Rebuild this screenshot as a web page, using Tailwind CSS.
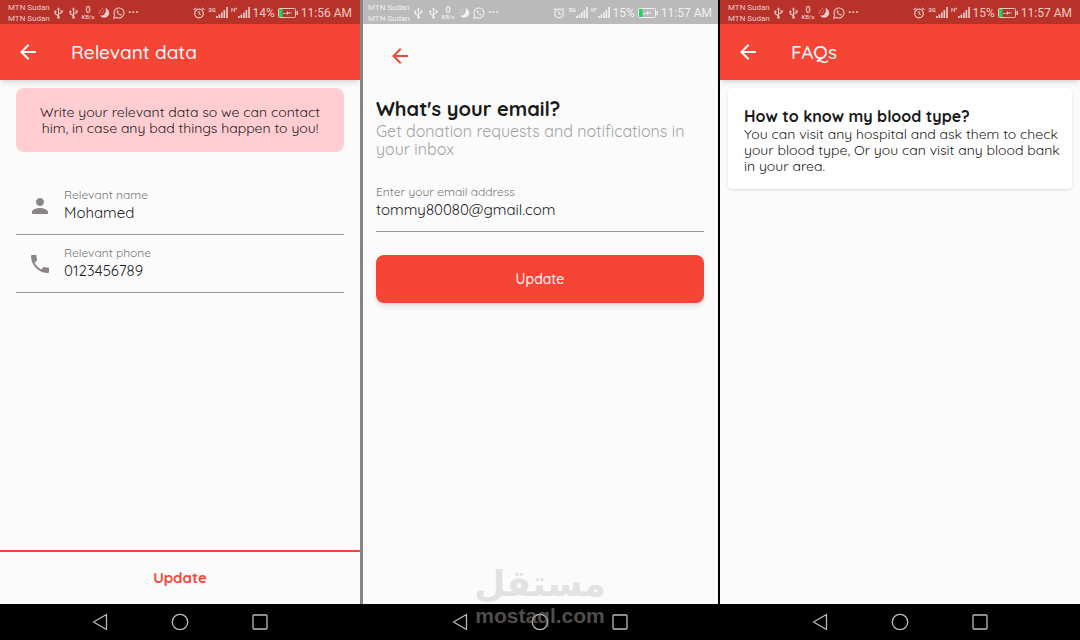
<!DOCTYPE html>
<html lang="en">
<head>
    <meta charset="UTF-8">
    <meta name="viewport" content="width=device-width, initial-scale=1.0">
    <title>Blood Donation App - Screens</title>
    <!-- Tailwind CSS CDN -->
    <script src="https://cdn.jsdelivr.net/npm/@tailwindcss/browser@4"></script>
</head>
<body class="min-h-screen bg-black font-['Quicksand','Lato',sans-serif] text-[#222]">
    <!-- Shared icons -->
    <svg class="hidden">
        <symbol id="usb" viewBox="0 0 10 13">
            <path d="M5 2v9M5 9.500L1.500 7.500V5M5 8l3.500-2V4.500" fill="none" stroke="currentColor" stroke-width="1.200"/>
            <path d="M5 0l1.800 2.800H3.200z" fill="currentColor"/>
            <circle cx="5" cy="11.300" r="1.500" fill="currentColor"/>
            <circle cx="1.500" cy="5" r="1.300" fill="currentColor"/>
            <path d="M7.300 3.500h2.400v2.400H7.300z" fill="currentColor"/>
        </symbol>
        <symbol id="moon" viewBox="0 0 12 12">
            <path d="M7.500 1A5 5 0 1 1 2 8.500C5.500 9 8.800 6 7.500 1z" fill="currentColor"/>
            <path d="M1.500 6.500A4.500 4.500 0 0 1 6 1.500" fill="none" stroke="currentColor" stroke-width="1" stroke-dasharray="1 1.500"/>
            <path d="M4 6A3 3 0 0 1 6 4" fill="none" stroke="currentColor" stroke-width=".8" stroke-dasharray="1 1"/>
        </symbol>
        <symbol id="chat" viewBox="0 0 12 12">
            <path d="M.8 11.200l.8-2.800A5 5 0 1 1 3.600 10.400z" fill="none" stroke="currentColor" stroke-width="1.100"/>
            <path d="M4.300 3.200c-1 .6-.8 2 .6 3.600s3 2.200 3.800 1.200c.4-.5.2-.8-1-1.300l-.8.7C6 7 5.300 6.300 5 5.500l.6-.7c-.4-1.200-.7-1.900-1.300-1.600z" fill="currentColor"/>
        </symbol>
        <symbol id="alarm" viewBox="0 0 12 12">
            <circle cx="6" cy="6.500" r="4.300" fill="none" stroke="currentColor" stroke-width="1.200"/>
            <path d="M6 4v2.800l1.800 1M.6 2.800L3 .8M11.400 2.800L9 .8" fill="none" stroke="currentColor" stroke-width="1.100"/>
        </symbol>
        <symbol id="bars" viewBox="0 0 12 11">
            <path d="M0 9h1.700v2H0zM2.500 7.500h1.700V11H2.500zM5 5.500h1.700V11H5zM7.500 3h1.700v8H7.500zM10.200 0h1.700v11h-1.700z" fill="currentColor"/>
        </symbol>
        <symbol id="battery" viewBox="0 0 20 10">
            <rect x=".5" y=".5" width="17" height="9" rx="1" fill="none" stroke="currentColor"/>
            <path d="M18.500 3h1.500v4h-1.500z" fill="currentColor"/>
            <path d="M1 1h3.500v8H1z" fill="#22d35a"/>
            <path d="M5 5h3.500L9.500 3l1 1.500H14L13 5.500h-2.500L9.500 7l-1-1.300H5z" fill="currentColor"/>
        </symbol>
        <symbol id="back" viewBox="0 0 24 24">
            <path d="M20 11H7.830l5.590-5.590L12 4l-8 8 8 8 1.410-1.410L7.830 13H20v-2z" fill="currentColor"/>
        </symbol>
        <symbol id="person" viewBox="0 0 24 24">
            <path d="M12 12c2.210 0 4-1.790 4-4s-1.790-4-4-4-4 1.790-4 4 1.790 4 4 4zm0 2c-2.670 0-8 1.340-8 4v2h16v-2c0-2.660-5.330-4-8-4z" fill="currentColor"/>
        </symbol>
        <symbol id="phone" viewBox="0 0 24 24">
            <path d="M6.620 10.790c1.440 2.830 3.760 5.140 6.590 6.590l2.200-2.200c.27-.27.67-.36 1.020-.24 1.120.37 2.330.57 3.570.57.55 0 1 .45 1 1V20c0 .55-.45 1-1 1-9.390 0-17-7.610-17-17 0-.55.45-1 1-1h3.500c.55 0 1 .45 1 1 0 1.250.2 2.450.57 3.570.11.35.03.74-.25 1.020l-2.200 2.200z" fill="currentColor"/>
        </symbol>
        <symbol id="nav-back" viewBox="0 0 18 18">
            <path d="M15.500 1.500v15L2.500 9z" fill="none" stroke="currentColor" stroke-width="1.300" stroke-linejoin="round"/>
        </symbol>
        <symbol id="nav-home" viewBox="0 0 18 18">
            <circle cx="9" cy="9" r="7.700" fill="none" stroke="currentColor" stroke-width="1.300"/>
        </symbol>
        <symbol id="nav-recent" viewBox="0 0 18 18">
            <rect x="2" y="2" width="14" height="14" rx="1" fill="none" stroke="currentColor" stroke-width="1.300"/>
        </symbol>
    </svg>

    <main class="relative grid min-h-screen grid-cols-3">
        <!-- Relevant data -->
        <section class="flex flex-col">
            <div class="flex grow flex-col bg-[#fbfbfb]">
                <div class="flex h-6 items-center justify-between bg-[#b8322a] px-2 pt-px font-['Roboto',sans-serif] text-[#eec8c5]">
                    <div class="flex items-center gap-[3px]">
                        <p class="w-[43px] text-[8px] leading-[11px] whitespace-nowrap">MTN Sudan<br>MTN Sudan</p>
                        <div class="flex items-center gap-[3px]">
                            <svg class="mr-[3px] h-3 w-[9px]"><use href="#usb"/></svg>
                            <svg class="h-3 w-[9px]"><use href="#usb"/></svg>
                            <p class="w-[14px] text-center text-[9px] leading-[7px] font-medium">0<span class="block text-[6px] leading-[5px]">KB/s</span></p>
                            <svg class="size-3"><use href="#moon"/></svg>
                            <svg class="size-3"><use href="#chat"/></svg>
                            <span class="text-xs leading-3 font-bold">···</span>
                        </div>
                    </div>
                    <div class="flex items-center gap-[3px]">
                        <svg class="size-3"><use href="#alarm"/></svg>
                        <p class="flex items-start text-[6px] leading-[5px] font-bold">3G<svg class="h-[11px] w-3"><use href="#bars"/></svg></p>
                        <p class="flex items-start text-[6px] leading-[5px] font-bold">H⁺<svg class="h-[11px] w-3"><use href="#bars"/></svg></p>
                        <span class="text-xs">14%</span>
                        <svg class="h-[10px] w-5"><use href="#battery"/></svg>
                        <span class="text-xs">11:56 AM</span>
                    </div>
                </div>
                <header class="flex h-14 items-center gap-[31px] bg-[#f64435] px-4 text-white shadow-md">
                    <button aria-label="Back"><svg class="size-6"><use href="#back"/></svg></button>
                    <h1 class="text-[19px] font-medium">Relevant data</h1>
                </header>
                <div class="px-4 pt-2">
                    <p class="rounded-lg bg-[#ffcdd2] p-4 text-center text-sm leading-4">Write your relevant data so we can contact<br>him, in case any bad things happen to you!</p>
                </div>
                <form class="mt-[25px] px-4">
                    <div class="flex h-[58px] items-center gap-3 border-b border-[#999] pl-3">
                        <svg class="size-6 text-[#8b8585]"><use href="#person"/></svg>
                        <div class="grow">
                            <label for="name" class="block text-xs leading-4 text-[#777]">Relevant name</label>
                            <input id="name" type="text" value="Mohamed" class="block h-[21px] w-full text-[15px] outline-none">
                        </div>
                    </div>
                    <div class="flex h-[58px] items-center gap-3 border-b border-[#999] pl-3">
                        <svg class="size-6 text-[#8b8585]"><use href="#phone"/></svg>
                        <div class="grow">
                            <label for="phone-number" class="block text-xs leading-4 text-[#777]">Relevant phone</label>
                            <input id="phone-number" type="tel" value="0123456789" class="block h-[21px] w-full text-[15px] outline-none">
                        </div>
                    </div>
                </form>
                <button class="mt-auto h-[54px] border-t-2 border-[#f64435] text-[15px] font-bold text-[#f64435]">Update</button>
            </div>
            <nav class="flex h-9 items-center justify-center gap-[62px] bg-black text-[#bbb]">
                <button aria-label="Back"><svg class="size-[18px]"><use href="#nav-back"/></svg></button>
                <button aria-label="Home"><svg class="size-[18px]"><use href="#nav-home"/></svg></button>
                <button aria-label="Recent apps"><svg class="size-[18px]"><use href="#nav-recent"/></svg></button>
            </nav>
        </section>

        <!-- Email -->
        <section class="flex flex-col">
            <div class="flex grow flex-col border-r-2 border-l-[3px] border-r-black border-l-[#858384] bg-[#fbfbfb]">
                <div class="flex h-6 items-center justify-between bg-[#bababa] pt-px pr-[6px] pl-[5px] font-['Roboto',sans-serif] text-[#efefef]">
                    <div class="flex items-center gap-[3px]">
                        <p class="w-[43px] text-[8px] leading-[11px] whitespace-nowrap">MTN Sudan<br>MTN Sudan</p>
                        <div class="flex items-center gap-[3px]">
                            <svg class="mr-[3px] h-3 w-[9px]"><use href="#usb"/></svg>
                            <svg class="h-3 w-[9px]"><use href="#usb"/></svg>
                            <p class="w-[14px] text-center text-[9px] leading-[7px] font-medium">0<span class="block text-[6px] leading-[5px]">KB/s</span></p>
                            <svg class="size-3"><use href="#moon"/></svg>
                            <svg class="size-3"><use href="#chat"/></svg>
                            <span class="text-xs leading-3 font-bold">···</span>
                        </div>
                    </div>
                    <div class="flex items-center gap-[3px]">
                        <svg class="size-3"><use href="#alarm"/></svg>
                        <p class="flex items-start text-[6px] leading-[5px] font-bold">3G<svg class="h-[11px] w-3"><use href="#bars"/></svg></p>
                        <p class="flex items-start text-[6px] leading-[5px] font-bold">H⁺<svg class="h-[11px] w-3"><use href="#bars"/></svg></p>
                        <span class="text-xs">15%</span>
                        <svg class="h-[10px] w-5"><use href="#battery"/></svg>
                        <span class="text-xs">11:57 AM</span>
                    </div>
                </div>
                <form class="pt-5 pr-[14px] pl-[13px]">
                    <button type="button" aria-label="Back" class="ml-3 block text-[#f64435]"><svg class="size-6"><use href="#back"/></svg></button>
                    <h1 class="mt-7 text-xl leading-[26px] font-bold text-[#1a1a1a]">What's your email?</h1>
                    <p class="text-base leading-[18px] text-[#a3a3a3]">Get donation requests and notifications in<br>your inbox</p>
                    <div class="mt-[26px] h-12 border-b border-[#999]">
                        <label for="email" class="block text-xs leading-4 text-[#777]">Enter your email address</label>
                        <input id="email" type="email" value="tommy80080@gmail.com" class="block h-[21px] w-full text-[15px] outline-none">
                    </div>
                    <button type="button" class="mt-[23px] h-12 w-full rounded-lg bg-[#f64435] text-sm font-medium text-white shadow-md">Update</button>
                </form>
            </div>
            <nav class="flex h-9 items-center justify-center gap-[62px] bg-black text-[#bbb]">
                <button aria-label="Back"><svg class="size-[18px]"><use href="#nav-back"/></svg></button>
                <button aria-label="Home"><svg class="size-[18px]"><use href="#nav-home"/></svg></button>
                <button aria-label="Recent apps"><svg class="size-[18px]"><use href="#nav-recent"/></svg></button>
            </nav>
        </section>

        <!-- FAQs -->
        <section class="flex flex-col">
            <div class="flex grow flex-col bg-[#fbfbfb]">
                <div class="flex h-6 items-center justify-between bg-[#b8322a] px-2 pt-px font-['Roboto',sans-serif] text-[#eec8c5]">
                    <div class="flex items-center gap-[3px]">
                        <p class="w-[43px] text-[8px] leading-[11px] whitespace-nowrap">MTN Sudan<br>MTN Sudan</p>
                        <div class="flex items-center gap-[3px]">
                            <svg class="mr-[3px] h-3 w-[9px]"><use href="#usb"/></svg>
                            <svg class="h-3 w-[9px]"><use href="#usb"/></svg>
                            <p class="w-[14px] text-center text-[9px] leading-[7px] font-medium">0<span class="block text-[6px] leading-[5px]">KB/s</span></p>
                            <svg class="size-3"><use href="#moon"/></svg>
                            <svg class="size-3"><use href="#chat"/></svg>
                            <span class="text-xs leading-3 font-bold">···</span>
                        </div>
                    </div>
                    <div class="flex items-center gap-[3px]">
                        <svg class="size-3"><use href="#alarm"/></svg>
                        <p class="flex items-start text-[6px] leading-[5px] font-bold">3G<svg class="h-[11px] w-3"><use href="#bars"/></svg></p>
                        <p class="flex items-start text-[6px] leading-[5px] font-bold">H⁺<svg class="h-[11px] w-3"><use href="#bars"/></svg></p>
                        <span class="text-xs">15%</span>
                        <svg class="h-[10px] w-5"><use href="#battery"/></svg>
                        <span class="text-xs">11:57 AM</span>
                    </div>
                </div>
                <header class="flex h-14 items-center gap-[31px] bg-[#f64435] px-4 text-white shadow-md">
                    <button aria-label="Back"><svg class="size-6"><use href="#back"/></svg></button>
                    <h1 class="text-[19px] font-medium">FAQs</h1>
                </header>
                <div class="px-2 pt-2">
                    <article class="rounded bg-white pt-[18px] pr-2 pb-[15px] pl-4 shadow">
                        <h2 class="text-base leading-5 font-bold text-[#1a1a1a]">How to know my blood type?</h2>
                        <p class="text-sm leading-4">You can visit any hospital and ask them to check<br>your blood type, Or you can visit any blood bank<br>in your area.</p>
                    </article>
                </div>
            </div>
            <nav class="flex h-9 items-center justify-center gap-[62px] bg-black text-[#bbb]">
                <button aria-label="Back"><svg class="size-[18px]"><use href="#nav-back"/></svg></button>
                <button aria-label="Home"><svg class="size-[18px]"><use href="#nav-home"/></svg></button>
                <button aria-label="Recent apps"><svg class="size-[18px]"><use href="#nav-recent"/></svg></button>
            </nav>
        </section>

        <!-- Watermark -->
        <div class="pointer-events-none absolute inset-x-0 bottom-3 flex flex-col items-center font-bold">
            <span lang="ar" dir="rtl" class="font-['DejaVu_Sans',sans-serif] text-4xl leading-10 text-[#e2e2e2]">مستقل</span>
            <span class="font-['Liberation_Sans',sans-serif] text-[21px] leading-6 text-[#8a8283]/60">mostaql.com</span>
        </div>
    </main>
</body>
</html>
